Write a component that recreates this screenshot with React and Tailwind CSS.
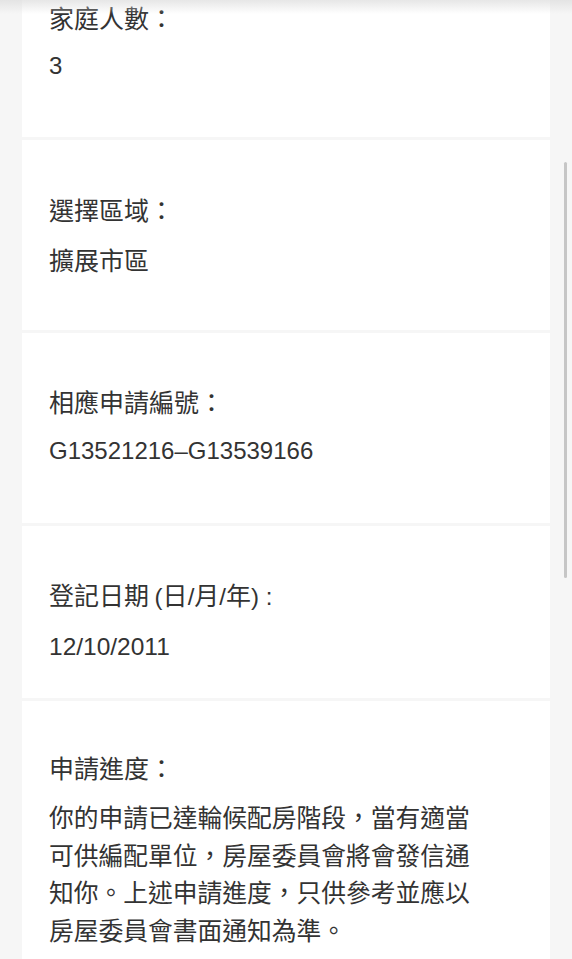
function Card({ className, children }) {
  return <div className={"bg-white pl-[27px] " + className}>{children}</div>;
}

export default function App() {
  return (
    <div className="relative h-screen w-full overflow-hidden bg-[#f6f6f6] text-[#333333] font-['Noto_Sans_CJK_TC','Noto_Sans_CJK_SC',sans-serif]">
      <div className="flex flex-col gap-[3px] px-[22px]">
        <Card className="-mt-[51px] pt-[50px] pb-[53px]">
          <div className="text-[25px] leading-[36px]">家庭人數：</div>
          <div className="mt-[13px] text-[24px] leading-[36px] font-['Liberation_Sans',sans-serif]">3</div>
        </Card>
        <Card className="pt-[51px] pb-[53px]">
          <div className="text-[25px] leading-[36px]">選擇區域：</div>
          <div className="mt-[14px] text-[25px] leading-[36px]">擴展市區</div>
        </Card>
        <Card className="pt-[50px] pb-[54px]">
          <div className="text-[25px] leading-[36px]">相應申請編號：</div>
          <div className="mt-[14px] text-[24px] leading-[36px] font-['Liberation_Sans',sans-serif]">G13521216–G13539166</div>
        </Card>
        <Card className="pt-[50px] pb-[33px]">
          <div className="text-[25px] leading-[36px]">
            登記日期 <span className="text-[24px] font-['Liberation_Sans',sans-serif]">(</span>日<span className="text-[24px] font-['Liberation_Sans',sans-serif]">/</span>月<span className="text-[24px] font-['Liberation_Sans',sans-serif]">/</span>年<span className="text-[24px] font-['Liberation_Sans',sans-serif]">) :</span>
          </div>
          <div className="mt-[14px] text-[24.5px] leading-[36px] font-['Liberation_Sans',sans-serif]">12/10/2011</div>
        </Card>
        <Card className="pt-[48px] pb-[50px]">
          <div className="text-[25px] leading-[36px]">申請進度：</div>
          <p className="mt-[13px] w-[440px] text-[24.75px] leading-[37.5px]">
            你的申請已達輪候配房階段，當有適當可供編配單位，房屋委員會將會發信通知你。上述申請進度，只供參考並應以房屋委員會書面通知為準。
          </p>
        </Card>
      </div>
      <div className="pointer-events-none absolute left-0 top-0 h-[14px] w-full bg-gradient-to-b from-[#dcdcdc] to-transparent opacity-70" />
      <div className="absolute left-[564px] top-[162px] h-[416px] w-[3px] rounded-full bg-[#c6c6c6]" />
    </div>
  );
}
